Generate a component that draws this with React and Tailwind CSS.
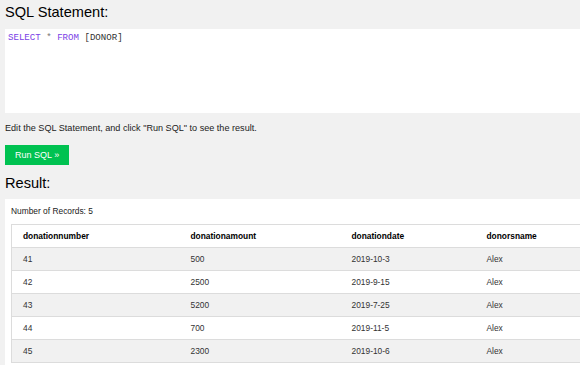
import React from 'react';

const rows = [
  { number: '41', amount: '500', date: '2019-10-3', name: 'Alex' },
  { number: '42', amount: '2500', date: '2019-9-15', name: 'Alex' },
  { number: '43', amount: '5200', date: '2019-7-25', name: 'Alex' },
  { number: '44', amount: '700', date: '2019-11-5', name: 'Alex' },
  { number: '45', amount: '2300', date: '2019-10-6', name: 'Alex' },
];

const App = () => {
  return (
    <div className="w-[580px] h-[365px] overflow-hidden bg-[#f1f1f1] pl-[5px] font-['Liberation_Sans',Arial,sans-serif] text-black">
      <h2 className="h-[29px] pt-[4px] text-[14.6px] leading-[16px] font-normal">SQL Statement:</h2>

      <div className="h-[84px] bg-white pl-[3px] pt-[3px] font-['Liberation_Mono','Courier_New',monospace] text-[9.1px] leading-[12px] text-[#333] whitespace-pre">
        <span className="text-[#7a41e6]">SELECT</span>
        <span className="text-[#777]"> * </span>
        <span className="text-[#7a41e6]">FROM</span>
        <span> [DONOR]</span>
      </div>

      <p className="mt-[10px] h-[11px] text-[9.1px] leading-[11px] text-[#222]">
        Edit the SQL Statement, and click "Run SQL" to see the result.
      </p>

      <button className="mt-[11px] h-[20px] px-[10px] bg-[#00c251] text-white text-[9px] leading-[20px] flex items-center">
        Run SQL »
      </button>

      <h2 className="mt-[10px] h-[16px] text-[14.6px] leading-[16px] font-normal">Result:</h2>

      <div className="mt-[8px] h-[200px] bg-white pl-[6px] pt-[7px] overflow-hidden">
        <p className="h-[10px] text-[8.4px] leading-[10px] text-[#222]">Number of Records: 5</p>

        <table className="mt-[8px] w-[640px] table-fixed border-collapse border border-[#dcdcdc] text-[8.4px]">
          <colgroup>
            <col className="w-[168px]" />
            <col className="w-[161px]" />
            <col className="w-[135px]" />
            <col />
          </colgroup>
          <thead>
            <tr className="h-[23px] bg-white border-b border-[#dcdcdc]">
              <th className="pl-[11px] text-left font-bold text-black">donationnumber</th>
              <th className="pl-[11px] text-left font-bold text-black">donationamount</th>
              <th className="pl-[11px] text-left font-bold text-black">donationdate</th>
              <th className="pl-[11px] text-left font-bold text-black">donorsname</th>
            </tr>
          </thead>
          <tbody>
            {rows.map((r, i) => (
              <tr
                key={r.number}
                className={`h-[23px] border-b border-[#dcdcdc] text-[#333] ${i % 2 === 0 ? 'bg-[#f1f1f1]' : 'bg-white'}`}
              >
                <td className="pl-[11px]">{r.number}</td>
                <td className="pl-[11px]">{r.amount}</td>
                <td className="pl-[11px]">{r.date}</td>
                <td className="pl-[11px]">{r.name}</td>
              </tr>
            ))}
          </tbody>
        </table>
      </div>
    </div>
  );
};

export default App;
